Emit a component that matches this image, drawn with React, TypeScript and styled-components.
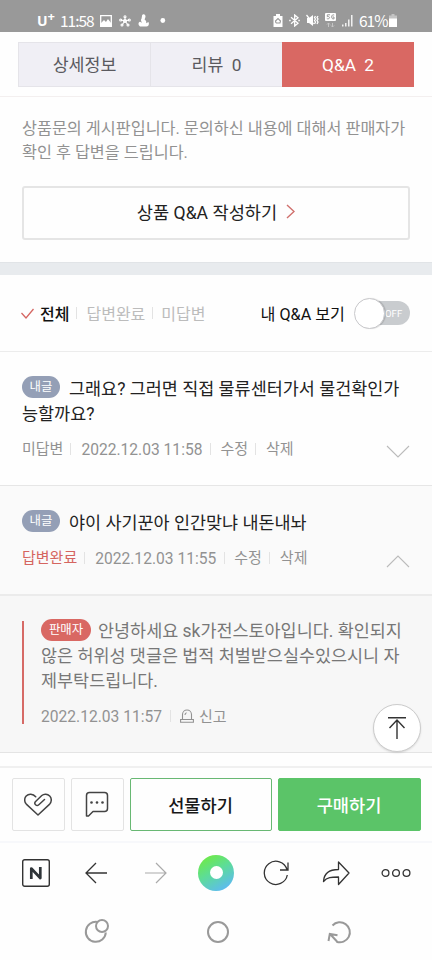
import React from "react";
import styled, { createGlobalStyle } from "styled-components";

const Global = createGlobalStyle`
  * { box-sizing: border-box; }
  body { margin: 0; background: #fefefe; }
  button { font: inherit; padding: 0; margin: 0; border: 0; background: none; color: inherit; letter-spacing: inherit; }
  svg { display: block; flex: none; }
`;

const Screen = styled.div`
  width: 432px;
  height: 960px;
  overflow: hidden;
  display: flex;
  flex-direction: column;
  background: #fefefe;
  color: #222;
  font-family: Roboto, "Noto Sans CJK KR", sans-serif;
  white-space: nowrap;
`;

const StatusBar = styled.header`
  height: 32px;
  flex: none;
  background: #999;
  color: #fff;
  display: flex;
  justify-content: space-between;
  padding: 10px 35px 0 37px;
  font: 300 15.5px/22px "Noto Sans CJK KR", sans-serif;
`;
const StatusGroup = styled.div<{ $gap: number }>`
  display: flex;
  align-items: center;
  gap: ${(p) => p.$gap}px;
  height: 21px;
`;
const Carrier = styled.span`
  font: 700 14px/22px "Open Sans", sans-serif;
  display: flex;
  width: 16px;
  sup { font-size: 13px; line-height: 13px; }
`;
const StatusText = styled.span<{ $w: number }>`
  width: ${(p) => p.$w}px;
  height: 22px;
  line-height: 20px;
  letter-spacing: -1px;
  font-weight: 400;
`;

const TabHeader = styled.nav`
  height: 65px;
  flex: none;
  padding: 10px 18px 0;
  border-bottom: 1px solid #f3efef;
  display: grid;
  grid-template-columns: 1fr 1fr 1fr;
`;
const Tab = styled.button<{ $active?: boolean }>`
  height: 45px;
  border: 1px solid ${(p) => (p.$active ? "#d96863" : "#e5e4e9")};
  border-right-width: ${(p) => (p.$active ? 1 : 0)}px;
  background: ${(p) => (p.$active ? "#d96863" : "#f0eff5")};
  color: ${(p) => (p.$active ? "#fff" : "#5a5a5f")};
  font-size: 17.3px;
  line-height: 45px;
  word-spacing: 4px;
`;

const Intro = styled.section`
  height: 165px;
  flex: none;
  padding: 20px 22px 0;
`;
const Notice = styled.p`
  margin: 0 0 21px;
  color: #929292;
  font-size: 16.25px;
  line-height: 24px;
`;
const WriteButton = styled.button`
  width: 100%;
  height: 54px;
  border: 2px solid #e5e5e5;
  border-radius: 3px;
  display: flex;
  align-items: center;
  justify-content: center;
  gap: 9px;
  padding-bottom: 3px;
  font-size: 17.6px;
  color: #222;
`;
const Band = styled.div`
  height: 13px;
  flex: none;
  background: #e8ebee;
  border-top: 1px solid #e1e4e7;
`;

const FilterBar = styled.div`
  height: 77px;
  flex: none;
  padding: 0 22px 0 21px;
  border-bottom: 1px solid #ececec;
  display: flex;
  align-items: center;
  font-size: 16px;
`;
const FilterOption = styled.span<{ $active?: boolean }>`
  display: flex;
  align-items: center;
  color: ${(p) => (p.$active ? "#111" : "#bcbcbc")};
  font-weight: ${(p) => (p.$active ? 500 : 400)};
  svg { margin-right: 6px; }
`;
const Divider = styled.i<{ $left: number; $right: number }>`
  width: 1px;
  height: 12px;
  flex: none;
  background: #e3e3e3;
  margin: 0 ${(p) => p.$right}px 0 ${(p) => p.$left}px;
`;
const ToggleLabel = styled.label`
  display: flex;
  align-items: center;
  margin-left: auto;
  color: #111;
  font-size: 16.2px;
  gap: 9px;
`;
const Toggle = styled.span`
  width: 56px;
  height: 31px;
  display: flex;
  align-items: center;
`;
const Knob = styled.span`
  width: 31px;
  height: 31px;
  flex: none;
  border-radius: 50%;
  background: #fff;
  border: 1px solid #c9c9cc;
  box-shadow: 1px 0 1px rgba(0, 0, 0, 0.15);
  z-index: 1;
`;
const Track = styled.span`
  width: 43px;
  height: 24px;
  margin-left: -18px;
  padding-left: 18px;
  flex: none;
  border-radius: 0 12px 12px 0;
  background: #c9cccf;
  color: #fff;
  font-size: 9.6px;
  line-height: 25px;
`;

const Question = styled.article<{ $answered?: boolean }>`
  height: ${(p) => (p.$answered ? 110 : 134)}px;
  flex: none;
  padding: 25px 22px 0;
  background: ${(p) => (p.$answered ? "#fafafa" : "#fefefe")};
  border-bottom: ${(p) => (p.$answered ? "2px solid #ebebeb" : "1px solid #e6e6e6")};
`;
const Body = styled.h3<{ $reply?: boolean }>`
  margin: 0;
  font-weight: 400;
  font-size: 17.45px;
  line-height: 25px;
  color: ${(p) => (p.$reply ? "#777" : "#222")};
`;
const Badge = styled.span<{ $seller?: boolean }>`
  display: inline-block;
  width: ${(p) => (p.$seller ? 50 : 38)}px;
  height: 22px;
  margin-right: ${(p) => (p.$seller ? 7 : 9)}px;
  border-radius: 11px;
  background: ${(p) => (p.$seller ? "#d96863" : "#949fb6")};
  color: #fff;
  font-size: 12.4px;
  line-height: 21px;
  text-align: center;
  vertical-align: ${(p) => (p.$seller ? 3 : 4)}px;
  margin-top: -5px;
  margin-bottom: -5px;
`;
const Meta = styled.div<{ $top: number }>`
  height: 22px;
  margin-top: ${(p) => p.$top}px;
  display: flex;
  align-items: center;
  color: #929292;
  font-size: 15px;
  line-height: 22px;
`;
const MetaText = styled.span<{ $done?: boolean }>`
  height: 22px;
  line-height: 23px;
  color: ${(p) => (p.$done ? "#d56560" : "#929292")};
`;
const DateText = styled.time`
  font-size: 15.6px;
  height: 22px;
  line-height: 25px;
`;
const ChevronSlot = styled.span`
  margin-left: auto;
  padding-top: 6px;
`;

const ReplyPanel = styled.section`
  position: relative;
  height: 157px;
  flex: none;
  padding: 25px 22px 0;
  background: #f7f7f7;
  border-bottom: 1px solid #e4e4e4;
`;
const ReplyBody = styled.div`
  height: 103px;
  border-left: 2px solid #d66a66;
  padding-left: 17px;
  display: flex;
  flex-direction: column;
  & > h3 { margin-top: -2px; }
`;
const ReportLabel = styled(MetaText)`
  margin-left: 5px;
  line-height: 24px;
`;
const TopButton = styled.button`
  position: absolute;
  right: 11px;
  bottom: 0;
  width: 48px;
  height: 48px;
  display: grid;
  place-items: center;
  border-radius: 50%;
  background: #fff;
  border: 1px solid #ccc;
  box-shadow: 0 1px 2px rgba(0, 0, 0, 0.12);
`;

const ActionBar = styled.div`
  height: 75px;
  flex: none;
  margin-top: 13px;
  border-top: 2px solid #f0f0f0;
  padding: 10px 12px 0;
  display: grid;
  grid-template-columns: 53px 53px 142px 143px;
  column-gap: 6px;
`;
const ActionButton = styled.button<{ $kind: "icon" | "line" | "solid" }>`
  height: 53px;
  border-radius: 2px;
  display: grid;
  place-items: center;
  padding: 0 1px 1px 0;
  font-size: 17.6px;
  font-weight: 500;
  border: 1px solid ${(p) => ({ icon: "#e3e3e3", line: "#68b873", solid: "#5bc468" })[p.$kind]};
  background: ${(p) => (p.$kind === "solid" ? "#5bc468" : "#fefefe")};
  color: ${(p) => (p.$kind === "solid" ? "#fff" : "#181818")};
`;

const BrowserBar = styled.nav`
  height: 61px;
  flex: none;
  border-top: 2px solid #f7f8fb;
  padding: 0 6px;
  display: grid;
  grid-template-columns: repeat(7, 60px);
  place-items: center;
`;
const HomeRing = styled.span`
  width: 36px;
  height: 36px;
  border-radius: 50%;
  display: grid;
  place-items: center;
  background: linear-gradient(150deg, #6ee94c 12%, #5ddd96 45%, #5dbdea 85%);
  &::after { content: ""; width: 13px; height: 13px; border-radius: 50%; background: #fff; }
`;
const SystemNav = styled.nav`
  flex: 1;
  display: grid;
  grid-template-columns: 121px 121px 121px;
  justify-content: center;
  justify-items: center;
  padding: 16px 0 0 4px;
`;

type IconProps = { w: number; h: number; c?: string; s?: number; children: React.ReactNode };
const Icon = ({ w, h, c = "#333", s = 1.3, children }: IconProps) => (
  <svg width={w} height={h} viewBox={`0 0 ${w} ${h}`} fill="none" stroke={c} strokeWidth={s}>
    {children}
  </svg>
);

const QuestionMeta = ({ state, done, date, top }: { state: string; done?: boolean; date: string; top: number }) => (
  <Meta $top={top}>
    <MetaText $done={done}>{state}</MetaText>
    <Divider $left={7} $right={10} />
    <DateText>{date}</DateText>
    <Divider $left={8} $right={9} />
    <MetaText>수정</MetaText>
    <Divider $left={7} $right={10} />
    <MetaText>삭제</MetaText>
    <ChevronSlot>
      <Icon w={24} h={14} c="#bbb" s={1.1}>
        <path d={done ? "M1 13 12 2l11 11" : "m1 1 11 11L23 1"} />
      </Icon>
    </ChevronSlot>
  </Meta>
);

export default function App() {
  return (
    <Screen>
      <Global />
      <StatusBar>
        <StatusGroup $gap={7}>
          <Carrier>U<sup>+</sup></Carrier>
          <StatusText $w={33}>11:58</StatusText>
          <Icon w={12} h={12} c="#fff"><path d="M.7.7h10.6v10.6H.7z" /><path d="m1 9 3-3 2 2 2-3 3 4v2H1z" fill="#fff" /></Icon>
          <Icon w={12} h={12} c="#fff" s={1.1}>
            <path d="M6 6V2M6 6 2 5M6 6l4-1M6 6l-3 4M6 6l3 4" />
            <circle cx="6" cy="6" r="1.5" /><circle cx="6" cy="1.8" r="1" /><circle cx="1.7" cy="5" r="1" /><circle cx="10.3" cy="5" r="1" /><circle cx="3" cy="10" r="1" /><circle cx="9" cy="10" r="1" />
          </Icon>
          <Icon w={12} h={13} c="#fff" s={0}>
            <path fill="#fff" d="M4 2C4-.3 7.5-.3 7.5 2.5 7.5 4 6.500 4.500 6.800 6c1.500.5 1.800 2 1.200 3.200L10.500 8c1 2.500 0 4.500-2 4.500H2C0 11 0 8.500 2 7.800l2 1C3 7 2.500 6 3.500 4.700z" />
          </Icon>
          <Icon w={14} h={12} c="#fff" s={0}><circle cx="5.800" cy="5.500" r="2.400" fill="#fff" /></Icon>
        </StatusGroup>
        <StatusGroup $gap={6}>
          <Icon w={10} h={13} c="#fff" s={0}>
            <path fill="#fff" d="M3 0h4v2h2.500v11h-9V2H3z" /><path d="M3 9 2.500 7 5 4.500 7.500 7 7 9H3" stroke="#999" strokeWidth="1.1" />
          </Icon>
          <Icon w={11} h={13} c="#fff" s={1.3}><path d="m2 3.300 7 6L5.700 12V1L9 3.700l-7 6M.2 6.500h1.500M9.300 6.500h1.500" /></Icon>
          <Icon w={13} h={13} c="#fff" s={1.3}>
            <path fill="#fff" stroke="none" d="M1 4h2l4-3v11L3 9H1z" /><path d="m.5 1 7 9M9.500 2l-1 1.500 1 1.500-1 1.500 1 1.500-1 2M12 2l-1 1.500L12 5l-1 1.500L12 8l-1 2" />
          </Icon>
          <Icon w={11} h={15} c="#fff" s={0}>
            <rect width="11" height="8" rx="1" fill="#fff" />
            <path d="M5 1.800H2.300v1.800c3-.6 3 2.500.2 2.200l-.7-.4M9.200 2C6 .7 5.500 6.600 9 5.900V4H7.500" stroke="#999" strokeWidth="1" />
            <path d="M3.500 14v-4L2 11.500M3.500 10 5 11.500M7.500 10v4L6 12.500M7.500 14 9 12.500" stroke="#c8c8c8" strokeWidth=".9" />
          </Icon>
          <Icon w={11} h={12} c="#fff" s={1.3}><path d="M.8 11.500v-2M3.800 11.500V8M6.800 11.500V4.500M9.800 11.500V0" /></Icon>
          <StatusGroup $gap={3}>
            <StatusText $w={27}>61%</StatusText>
            <Icon w={8} h={13} c="#fff" s={0}><path d="M2.500 0h3v1.500H8V5H0V1.500h2.500z" fill="#c4c4c4" /><path d="M0 4.500h8V13H0z" fill="#fff" /></Icon>
          </StatusGroup>
        </StatusGroup>
      </StatusBar>

      <TabHeader>
        <Tab>상세정보</Tab>
        <Tab>리뷰 0</Tab>
        <Tab $active>Q&amp;A 2</Tab>
      </TabHeader>

      <Intro>
        <Notice>
          상품문의 게시판입니다. 문의하신 내용에 대해서 판매자가<br />확인 후 답변을 드립니다.
        </Notice>
        <WriteButton>
          상품 Q&amp;A 작성하기
          <Icon w={9} h={15} c="#d0706d" s={1.4}><path d="m1 1 7 6.500L1 14" /></Icon>
        </WriteButton>
      </Intro>
      <Band />

      <FilterBar>
        <FilterOption $active>
          <Icon w={13} h={11} c="#d56662" s={1.3}><path d="m.5 5 4.500 5 7.500-9" /></Icon>
          전체
        </FilterOption>
        <Divider $left={7} $right={9} />
        <FilterOption>답변완료</FilterOption>
        <Divider $left={7} $right={8} />
        <FilterOption>미답변</FilterOption>
        <ToggleLabel>
          내 Q&amp;A 보기
          <Toggle><Knob /><Track>OFF</Track></Toggle>
        </ToggleLabel>
      </FilterBar>

      <Question>
        <Body><Badge>내글</Badge>그래요? 그러면 직접 물류센터가서 물건확인가<br />능할까요?</Body>
        <QuestionMeta state="미답변" date="2022.12.03 11:58" top={11} />
      </Question>
      <Question $answered>
        <Body><Badge>내글</Badge>야이 사기꾼아 인간맞냐 내돈내놔</Body>
        <QuestionMeta state="답변완료" done date="2022.12.03 11:55" top={11} />
      </Question>

      <ReplyPanel>
        <ReplyBody>
          <Body $reply>
            <Badge $seller>판매자</Badge>안녕하세요 sk가전스토아입니다. 확인되지<br />
            않은 허위성 댓글은 법적 처벌받으실수있으시니 자<br />
            제부탁드립니다.
          </Body>
          <Meta $top={11}>
            <DateText>2022.12.03 11:57</DateText>
            <Divider $left={8} $right={9} />
            <Icon w={14} h={14} c="#929292" s={1.1}><path d="M2.500 10.500V5.500a4.500 4.500 0 0 1 9 0v5M.6 10.500h12.800v2.800H.6zM5 6c0-1.200.6-2 1.600-2.200" /></Icon>
            <ReportLabel>신고</ReportLabel>
          </Meta>
        </ReplyBody>
        <TopButton aria-label="맨 위로">
          <Icon w={20} h={24} c="#333" s={1.4}><path d="M1 1.700h18M10 23V4M2.500 12 10 4l7.500 8" /></Icon>
        </TopButton>
      </ReplyPanel>

      <ActionBar>
        <ActionButton $kind="icon">
          <Icon w={28} h={24} c="#444" s={1.5}>
            <path strokeLinejoin="round" strokeLinecap="round" d="m20.500 7.500-5.700 5.300c-2.200 2-5.400-1-3.200-3.300l6.200-6C20 1.500 23.500 1.800 25.700 4c2.200 2.300 2 5.900 0 8.100L14 23 2.300 12.100C.2 9.900.1 6.300 2.200 4c2.500-2.700 6.800-2.500 9.500.8" />
          </Icon>
        </ActionButton>
        <ActionButton $kind="icon">
          <Icon w={24} h={26} c="#444" s={1.5}>
            <path strokeLinejoin="round" d="M4.500 1.500h15q3 0 3 3v13q0 3-3 3H8L3.500 25H1.500V4.500q0-3 3-3z" />
            <g fill="#444" stroke="none"><circle cx="6.500" cy="11.500" r="1.300" /><circle cx="12" cy="11.500" r="1.300" /><circle cx="17.500" cy="11.500" r="1.300" /></g>
          </Icon>
        </ActionButton>
        <ActionButton $kind="line">선물하기</ActionButton>
        <ActionButton $kind="solid">구매하기</ActionButton>
      </ActionBar>

      <BrowserBar>
        <Icon w={28} h={28} s={1.4}>
          <rect x=".7" y=".7" width="26.600" height="26.600" rx="2" />
          <path stroke="#2e3438" strokeWidth="2.700" strokeLinejoin="round" d="M9.300 20V9.500l9 9.500V8" />
        </Icon>
        <Icon w={22} h={22} s={1.3}><path d="M22 11H1M11 1 1 11l10 10" /></Icon>
        <Icon w={22} h={22} c="#aaa" s={1.2}><path d="M0 11h21M11 1l10 10-10 10" /></Icon>
        <HomeRing />
        <Icon w={26} h={26} s={1.3}><path d="M24.300 15A11.600 11.600 0 1 1 24 9.500M25 2.500V10h-8" /></Icon>
        <Icon w={28} h={26} s={1.3}><path strokeLinejoin="round" d="M16.500 2v7.500C7.500 9.500 2 12.500 1.500 21.500c3.500-4.500 8-4.500 15-4.500v7.500L27 13z" /></Icon>
        <Icon w={30} h={10} s={1.3}><circle cx="4.500" cy="5" r="3.400" /><circle cx="15" cy="5" r="3.400" /><circle cx="25.500" cy="5" r="3.400" /></Icon>
      </BrowserBar>
      <SystemNav>
        <Icon w={26} h={28} c="#999" s={2}><path d="M13.500 4a10 10 0 1 0 8.300 10.500" /><circle cx="18" cy="8" r="6" /></Icon>
        <Icon w={26} h={28} c="#999" s={2}><circle cx="13" cy="14" r="10" /></Icon>
        <Icon w={26} h={28} c="#999" s={2}><path d="M6.500 7.500a10 10 0 1 1 4 16.200M2.500 23l1.300-7 7.700 1.300M4.500 16.500l6.500 7" /></Icon>
      </SystemNav>
    </Screen>
  );
}
